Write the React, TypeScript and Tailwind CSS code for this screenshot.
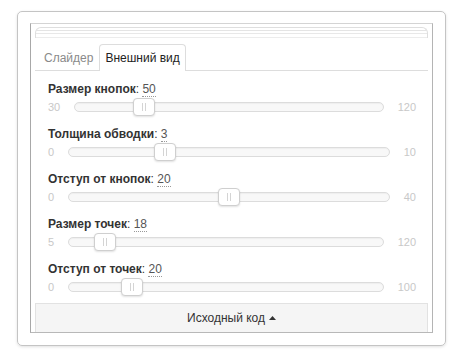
import React from 'react';

type SliderDef = { label: string; value: number; min: number; max: number };

const sliders: SliderDef[] = [
    { label: 'Размер кнопок', value: 50, min: 30, max: 120 },
    { label: 'Толщина обводки', value: 3, min: 0, max: 10 },
    { label: 'Отступ от кнопок', value: 20, min: 0, max: 40 },
    { label: 'Размер точек', value: 18, min: 5, max: 120 },
    { label: 'Отступ от точек', value: 20, min: 0, max: 100 },
];

const SliderRow: React.FC<{ s: SliderDef }> = ({ s }) => {
    const pct = ((s.value - s.min) / (s.max - s.min)) * 100;
    return (
        <div className="flex flex-col">
            <div className="h-[18px] leading-[18px] text-[12px] text-[#333]">
                <span className="font-bold">{s.label}</span>
                <span>: </span>
                <span className="text-[#555] border-b border-dotted border-[#999]">{s.value}</span>
            </div>
            <div className="h-[18px] flex items-center gap-[14px] text-[11px] text-[#c8c8c8]">
                <span>{s.min}</span>
                <div className="relative flex-1 h-[10px] rounded-full border border-[#dcdcdc] bg-[#f8f8f8] shadow-[inset_0_1px_1px_rgba(0,0,0,0.04)]">
                    <div
                        className="absolute top-1/2 w-[22px] h-[18px] -translate-x-1/2 -translate-y-1/2 rounded-[4px] border border-[#cfcfcf] bg-white shadow-[0_1px_2px_rgba(0,0,0,0.12)] flex items-center justify-center gap-[2px]"
                        style={{ left: `${pct}%` }}
                    >
                        <span className="w-px h-[8px] bg-[#d4d4d4]" />
                        <span className="w-px h-[8px] bg-[#d4d4d4]" />
                    </div>
                </div>
                <span>{s.max}</span>
            </div>
        </div>
    );
};

export default function App() {
    return (
        <div className="w-[463px] h-[358px] bg-white pt-[11px] pl-[17px] font-['Liberation_Sans',Arial,sans-serif]">
            <div className="w-[429px] h-[335px] rounded-[5px] border border-[#c4c4c4] shadow-[0_1px_3px_rgba(0,0,0,0.12)] pt-[11px] px-[12px] pb-[12px]">
                <div className="h-full flex flex-col border border-t-[#d4d4d4] border-r-[#b4b4b4] border-l-[#a8a8a8] border-b-[#b8b8b8] px-[4px]">
                    {/* cut-off content above the tabs */}
                    <div className="h-[14px] pt-[3px]">
                        <div className="h-[11px] rounded-t-[6px] border-t border-x border-[#dedede] flex flex-col gap-[2px] pt-[2px]">
                            <div className="h-px bg-[#e4e4e4]" />
                            <div className="h-px bg-[#e8e8e8]" />
                            <div className="h-px bg-[#ececec] mt-[2px]" />
                        </div>
                    </div>

                    <div className="mt-[6px] flex border-b border-[#dddddd] text-[12px] pl-[3px]">
                        <div className="h-[27px] -mb-px px-[6px] flex items-center text-[#8a8a8a]">Слайдер</div>
                        <div className="h-[27px] -mb-px px-[5px] flex items-center text-[#222] bg-white border-x border-t border-[#dddddd] rounded-t-[4px]">Внешний вид</div>
                    </div>

                    <div className="pt-[9px] pl-[13px] pr-[12px] flex flex-col gap-[9px]">
                        {sliders.map(s => (
                            <SliderRow key={s.label} s={s} />
                        ))}
                    </div>

                    <div className="mt-auto h-[29px] bg-[#f5f5f5] border-t border-x border-[#e2e2e2] flex items-center justify-center gap-[4px] text-[12px] text-[#333]">
                        <span>Исходный код</span>
                        <svg width="7" height="4" viewBox="0 0 7 4">
                            <path d="M0 4 L3.5 0 L7 4 Z" fill="#333" />
                        </svg>
                    </div>
                </div>
            </div>
        </div>
    );
}
